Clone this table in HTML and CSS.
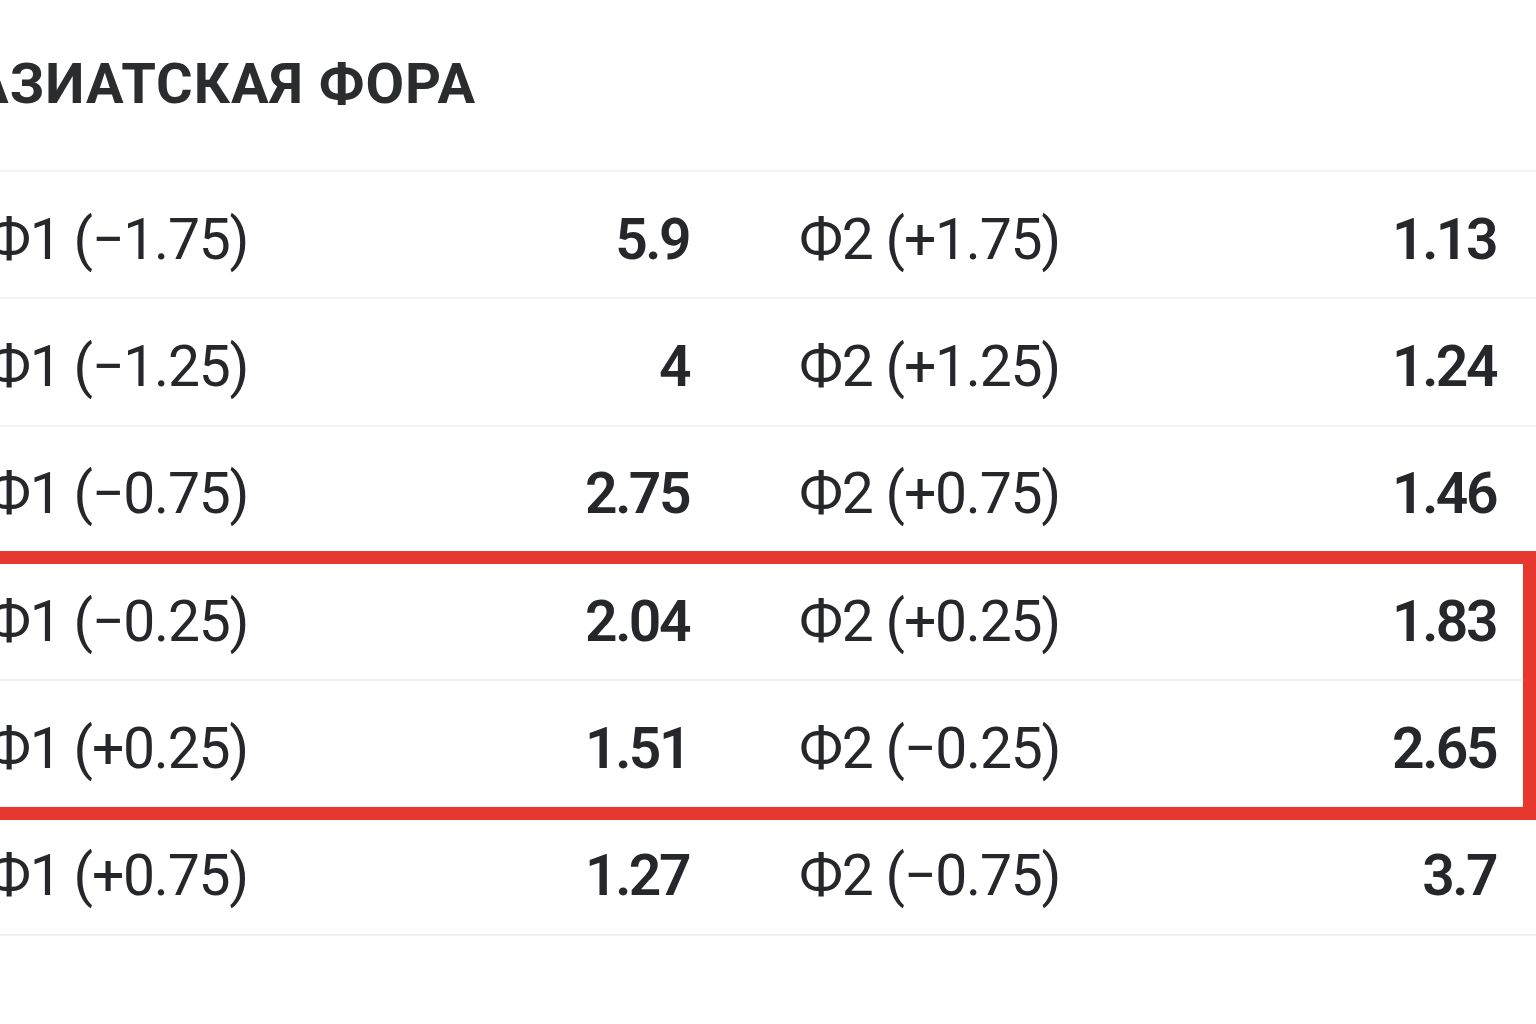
FILE: index.html
```html
<!DOCTYPE html>
<html lang="ru">
<head>
<meta charset="utf-8">
<title>Азиатская фора</title>
<link rel="stylesheet" href="styles.css">
</head>
<body>
<div class="market">
  <div class="market-head">
    <h2 class="market-title">Азиатская фора</h2>
  </div>
  <div class="rows">
    <div class="row">
      <div class="cell"><span class="label">Ф1 (−1.75)</span><span class="odd">5.9</span></div>
      <div class="cell"><span class="label">Ф2 (+1.75)</span><span class="odd">1.13</span></div>
    </div>
    <div class="row">
      <div class="cell"><span class="label">Ф1 (−1.25)</span><span class="odd">4</span></div>
      <div class="cell"><span class="label">Ф2 (+1.25)</span><span class="odd">1.24</span></div>
    </div>
    <div class="row">
      <div class="cell"><span class="label">Ф1 (−0.75)</span><span class="odd">2.75</span></div>
      <div class="cell"><span class="label">Ф2 (+0.75)</span><span class="odd">1.46</span></div>
    </div>
    <div class="highlight">
      <div class="row">
        <div class="cell"><span class="label">Ф1 (−0.25)</span><span class="odd">2.04</span></div>
        <div class="cell"><span class="label">Ф2 (+0.25)</span><span class="odd">1.83</span></div>
      </div>
      <div class="row">
        <div class="cell"><span class="label">Ф1 (+0.25)</span><span class="odd">1.51</span></div>
        <div class="cell"><span class="label">Ф2 (−0.25)</span><span class="odd">2.65</span></div>
      </div>
    </div>
    <div class="row">
      <div class="cell"><span class="label">Ф1 (+0.75)</span><span class="odd">1.27</span></div>
      <div class="cell"><span class="label">Ф2 (−0.75)</span><span class="odd">3.7</span></div>
    </div>
  </div>
</div>
</body>
</html>
```
FILE: styles.css
```css
html, body {
  margin: 0;
  padding: 0;
  background: #ffffff;
  overflow: hidden;
}
body {
  width: 1536px;
  height: 1024px;
  font-family: Roboto, "Noto Sans", "Liberation Sans", sans-serif;
  color: #25272a;
}
.market {
  margin-left: -13px;
  width: 1549px;
}
.market-head {
  height: 170px;
  border-bottom: 2px solid #f1f1f1;
  display: flex;
  align-items: center;
}
.market-title {
  margin: 0;
  margin-left: -16px;
  margin-top: -2px;
  font-size: 56px;
  font-weight: 700;
  text-transform: uppercase;
  letter-spacing: 1px;
  color: #2a2c2e;
}
.rows {
  display: flex;
  flex-direction: column;
}
.row {
  height: 127.3px;
  box-sizing: border-box;
  border-bottom: 2px solid #f1f1f1;
  display: grid;
  grid-template-columns: 705px 1fr;
  column-gap: 107px;
  padding-right: 37px;
  padding-top: 9px;
  align-items: center;
}
.cell {
  display: flex;
  justify-content: space-between;
  align-items: baseline;
}
.label {
  font-size: 57px;
  font-weight: 400;
  letter-spacing: -1.2px;
  color: #25272a;
}
.odd {
  font-size: 57px;
  font-weight: 600;
  letter-spacing: -2.5px;
  margin-right: 3px;
  color: #25272a;
}
.highlight {
  position: relative;
}
.highlight::after {
  content: "";
  position: absolute;
  top: -3px;
  bottom: -12px;
  left: -40px;
  right: 0;
  border: 13px solid #e8372f;
  pointer-events: none;
}
```
